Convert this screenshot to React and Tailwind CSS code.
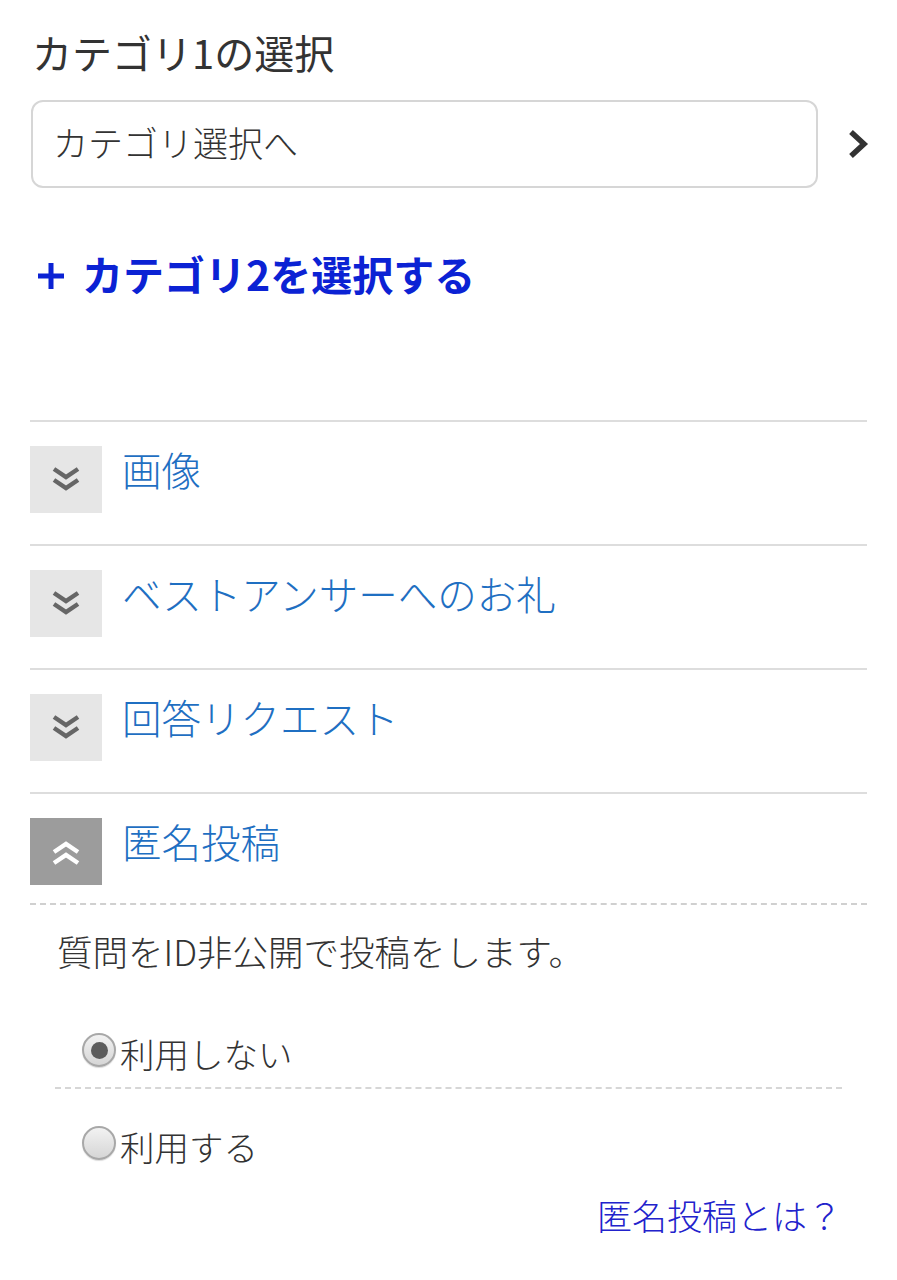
import React from 'react';

const font = { fontFamily: '"Noto Sans CJK JP", "Noto Sans", sans-serif' };

function DoubleChevron({ up = false, color }) {
  return (
    <svg width="30" height="28" viewBox="0 0 30 28" className={up ? 'rotate-180' : ''}>
      <path d="M3 3 L15 11 L27 3" fill="none" stroke={color} strokeWidth="4.5" strokeLinejoin="miter" />
      <path d="M3 14 L15 22 L27 14" fill="none" stroke={color} strokeWidth="4.5" strokeLinejoin="miter" />
    </svg>
  );
}

function Section({ title, open = false, last = false }) {
  return (
    <div className={`border-t-2 border-[#dddddd] pt-[24px] flex items-center ${last ? 'pb-[18px]' : 'pb-[31px]'}`}>
      <div className={`w-[72px] h-[67px] flex items-center justify-center ${open ? 'bg-[#9c9c9c]' : 'bg-[#e6e6e6]'}`}>
        <DoubleChevron up={open} color={open ? '#ffffff' : '#666666'} />
      </div>
      <span className="ml-[20px] mb-[22px] text-[39.5px] leading-[40px] font-light text-[#1f6fc2]">{title}</span>
    </div>
  );
}

function Radio({ checked, label }) {
  return (
    <label className="flex items-center pl-[27px]">
      <span className="w-[34px] h-[34px] rounded-full border-2 border-[#a8a8a8] bg-gradient-to-b from-[#f2f2f2] to-[#d6d6d6] flex items-center justify-center shadow-[0_1px_1px_rgba(0,0,0,0.15)]">
        {checked && <span className="w-[17px] h-[17px] rounded-full bg-[#5c5c5c]" />}
      </span>
      <span className="ml-[4px] text-[34.5px] leading-[50px] font-light text-[#333333] mt-[6px]">{label}</span>
    </label>
  );
}

export default function App() {
  return (
    <div className="min-h-screen bg-white px-[30px] pt-[27px]" style={font}>
      <h1 className="text-[40px] leading-[50px] font-normal text-[#333333] pl-[2px]">カテゴリ1の選択</h1>

      <div className="mt-[23px] flex items-center">
        <div className="w-[787px] h-[88px] ml-[1px] border-2 border-[#d6d6d6] rounded-[12px] flex items-center pl-[20px]">
          <span className="text-[35px] font-light text-[#333333] mb-[4px]">カテゴリ選択へ</span>
        </div>
        <div className="flex-1 flex justify-end">
          <svg width="22" height="32" viewBox="0 0 22 32" className="mr-[-2px]">
            <path d="M4 4 L17 16 L4 28" fill="none" stroke="#333333" strokeWidth="5.5" />
          </svg>
        </div>
      </div>

      <div className="mt-[60px] pl-[6px] text-[41px] leading-[50px] font-bold text-[#0b22d4] flex items-center">
        <svg width="30" height="30" viewBox="0 0 30 30" className="mr-[16px] mt-[2px]">
          <path d="M2 15 H28 M15 2 V28" stroke="#0b22d4" strokeWidth="5" fill="none" />
        </svg>
        <span className="mb-[4px]">カテゴリ2を選択する</span>
      </div>

      <div className="h-[118px]" />

      <Section title="画像" />
      <Section title="ベストアンサーへのお礼" />
      <Section title="回答リクエスト" />
      <Section title="匿名投稿" open last />
      <div className="border-t-2 border-dashed border-[#d0d0d0]" />

      <div className="mx-[25px]">
        <p className="mt-[21px] pl-[2px] text-[35.5px] leading-[50px] font-light text-[#333333]">質問をID非公開で投稿をします。</p>
        <div className="mt-[46px] pb-[9px]">
          <Radio checked label="利用しない" />
        </div>
        <div className="border-t-2 border-dashed border-[#d6d6d6]" />
        <div className="mt-[26px]">
          <Radio label="利用する" />
        </div>
        <div className="mt-[19px] flex justify-end">
          <span className="text-[35px] leading-[50px] font-light text-[#2222cc]">匿名投稿とは？</span>
        </div>
      </div>
    </div>
  );
}
